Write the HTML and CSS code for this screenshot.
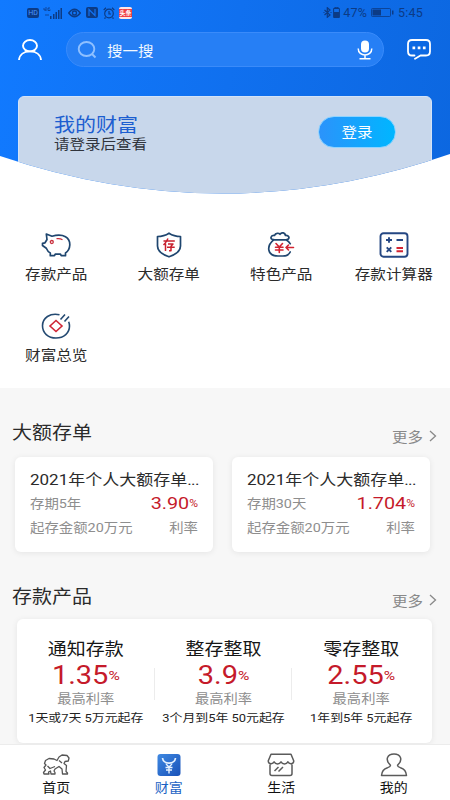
FILE: index.html
```html
<!DOCTYPE html>
<html lang="zh-CN">
<head>
<meta charset="utf-8">
<title>财富</title>
<link rel="stylesheet" href="styles.css">
</head>
<body>
<div class="app">
  <header class="hero">
    <div class="status">
      <div class="status-left">
        <span class="hd">HD</span>
        <svg class="signal" width="20" height="12" viewBox="0 0 20 12"><path d="M1 1v2h2M3 0v4M7 1H5v2.500h2V2.500M3 7v2M5 7v2" fill="none" stroke="currentColor" stroke-width=".8"/><path d="M7 9h1.500v3H7zM10 7h1.500v5H10zM12.500 5H14v7h-1.500zM15 3h1.500v9H15zM17.500 1H19v11h-1.500z" fill="currentColor"/></svg>
        <svg width="13" height="10" viewBox="0 0 13 10" fill="none" stroke="currentColor" stroke-width="1.300"><path d="M.7 5Q6.500-2.500 12.300 5 6.500 12.500.7 5Z"/><circle cx="6.500" cy="5" r="2"/></svg>
        <svg class="nfc" width="12" height="11" viewBox="0 0 12 11"><rect width="12" height="11" rx="2" fill="currentColor"/><path d="M3 9V2.500l6 6V2" fill="none" stroke="#1172f3" stroke-width="1.200"/></svg>
        <svg class="alarm" width="12" height="12" viewBox="0 0 12 12" fill="none" stroke="currentColor" stroke-width="1.200"><circle cx="6" cy="6.500" r="4.300"/><path d="M6 4v3h2M.7 3 3 .8M9 .8 11.300 3M2.500 10.500 1.500 11.700M9.500 10.500l1 1.200"/></svg>
        <span class="news">头条</span>
      </div>
      <div class="status-right">
        <svg width="9" height="11" viewBox="0 0 9 11" fill="none" stroke="currentColor" stroke-width="1.200"><path d="m1.500 3 5.500 5-2.700 2.300V.7L7 3 1.500 8M.5 5.500h1M7.500 5.500h1"/></svg>
        <svg width="7" height="11" viewBox="0 0 7 11"><path d="M2 0h3v1H2zM.6 1.500h5.800v9H.6z" fill="none" stroke="currentColor"/><path d="M1 5h5v5H1z" fill="currentColor"/></svg>
        <span class="pct">47%</span>
        <svg class="battery" width="23" height="9" viewBox="0 0 23 9"><rect x=".5" y=".5" width="19" height="8" rx="1" fill="none" stroke="currentColor" stroke-width=".8"/><path d="M1.500 1.500h8.500v6H1.500zM21 2.500h1.500v4H21z" fill="currentColor"/></svg>
        <span>5:45</span>
      </div>
    </div>
    <div class="topbar">
      <svg class="user" width="24" height="22" viewBox="0 0 24 22" fill="none" stroke="#fff" stroke-width="1.900"><ellipse cx="12" cy="6.700" rx="7" ry="5.700"/><path d="M1 21C1.500 15.500 6 12.400 12 12.400S22.500 15.500 23 21"/></svg>
      <div class="search">
        <svg width="20" height="18" viewBox="0 0 20 18" fill="none" stroke="#8fc0ff" stroke-width="1.900"><ellipse cx="9.500" cy="8" rx="7.800" ry="7"/><path d="m15 13 3.500 3.500"/></svg>
        <span class="flat">搜一搜</span>
        <svg class="mic" width="16" height="20" viewBox="0 0 16 20"><rect x="4" y=".5" width="8" height="12" rx="4" fill="#fff"/><path d="M1.200 8.500c0 8.700 13.600 8.700 13.600 0M8 15v3.500M2.500 18.700h11" fill="none" stroke="#fff" stroke-width="1.500"/></svg>
      </div>
      <svg class="chat" width="24" height="21" viewBox="0 0 24 21"><path d="M7.500 16.500H5Q1 16.500 1 12.500V5Q1 1 5 1h14q4 0 4 4v7.500q0 4-4 4h-5.500L8 19.800" fill="none" stroke="#fff" stroke-width="1.800" stroke-linejoin="round" stroke-linecap="round"/><path d="M5.500 7.500h2.700v2.700H5.500zM10.700 7.500h2.700v2.700h-2.700zM15.900 7.500h2.700v2.700h-2.700z" fill="#fff"/></svg>
    </div>
    <div class="wealth">
      <div>
        <div class="wealth-title flat">我的财富</div>
        <div class="wealth-sub flat">请登录后查看</div>
      </div>
      <div class="login"><span class="flat">登录</span></div>
    </div>
  </header>

  <nav class="menu">
    <div class="entry">
      <svg width="30" height="26" viewBox="0 0 30 26" fill="none" stroke="#1f466f" stroke-width="1.700" stroke-linejoin="round"><path d="M6 7.500 5.300 2 11 4.200C23 1 29 6 28.800 13c-.2 4-2 6.500-4.300 8v2.700h-4.300l-.7-1.500h-5.300l-.7 1.500H9.300V21C7 20 6 18 5.300 16.300L1.500 13.500V11.300L4 10.800Z"/><g stroke="#c92f3d" stroke-width="1.300"><circle cx="10.800" cy="10" r="1.500"/><path d="M15.500 6.700q3.500-.5 6 1"/></g></svg>
      <span class="flat">存款产品</span>
    </div>
    <div class="entry">
      <svg width="26" height="26" viewBox="0 0 26 26" fill="none" stroke="#1f466f" stroke-width="1.700" stroke-linejoin="round"><path d="M13 1.200Q18 4.500 24.500 4.500V14c0 5-5 8.500-11.500 10.800C6.500 22.500 1.500 19 1.500 14V4.500Q8 4.500 13 1.200Z"/><g stroke="#c71f2e" stroke-width="1.500"><path d="M7.500 9h11.300M12 6.500Q10.500 10 7.500 13M9.500 11.500V19M12 12h5l-2 2.300v4.500h-2M11 15.300h7.700"/></g></svg>
      <span class="flat">大额存单</span>
    </div>
    <div class="entry">
      <svg width="28" height="26" viewBox="0 0 28 26" fill="none" stroke="#1f466f" stroke-width="1.700" stroke-linecap="round" stroke-linejoin="round"><path d="M7 7.700C2 7.500 4 2.800 7.500 3.500 8.500.5 12 1 13 2.300 15-.2 18 .7 18.500 3.500 23 3 23 7.500 19 7.800ZM7 7.700C-1 14 0 24 11 24h5c3.500 0 6-1.300 7.200-4M19 7.800q3 1.700 4.300 4"/><g stroke="#d32432" stroke-width="1.600"><path d="m9 11.500 3.300 3.500 3.200-3.500M8.500 15.200H16M8.500 18H16M12.300 15v5.500M26.500 15.500H19M21.500 13 19 15.500l2.500 2.500"/></g></svg>
      <span class="flat">特色产品</span>
    </div>
    <div class="entry">
      <svg width="30" height="26" viewBox="0 0 30 26" fill="none" stroke="#254783" stroke-width="1.900"><rect x="1.500" y="1.200" width="27" height="23.500" rx="3"/><path d="M7 8h6M10 5.300v5.400M17.500 8H24M7.700 15.300l4.600 4.600m0-4.600-4.600 4.600"/><path d="M17.500 16H24M17.500 19.200H24" stroke="#d32432"/></svg>
      <span class="flat">存款计算器</span>
    </div>
    <div class="entry">
      <svg width="30" height="26" viewBox="0 0 30 26" fill="none" stroke="#244a72" stroke-width="1.600"><path d="M18.500 1.700C9-.5 1.500 5 1.500 12.800 1.500 20 7 25 15 25s13.500-5 13.500-12c0-1.700-.3-3-.8-4.300M19.500 6.500l4.500-5M23.500 8.500l4.500-5"/><path d="m15 7.500 6 5.500-6 5.500L9 13Z" stroke="#cf2635"/></svg>
      <span class="flat">财富总览</span>
    </div>
  </nav>

  <main class="content">
    <div class="section-head">
      <h2 class="flat">大额存单</h2>
      <div class="more"><span class="flat">更多</span><svg width="8" height="12" viewBox="0 0 8 12" fill="none" stroke="#898989" stroke-width="1.300"><path d="m1 1 5.500 5L1 11"/></svg></div>
    </div>
    <div class="certs">
      <article class="cert">
        <h3 class="flat">2021年个人大额存单<i>...</i></h3>
        <div class="cert-row"><span class="flat">存期5年</span><b class="rate">3.90<small>%</small></b></div>
        <div class="cert-row"><span class="flat">起存金额20万元</span><span class="flat">利率</span></div>
      </article>
      <article class="cert">
        <h3 class="flat">2021年个人大额存单<i>...</i></h3>
        <div class="cert-row"><span class="flat">存期30天</span><b class="rate">1.704<small>%</small></b></div>
        <div class="cert-row"><span class="flat">起存金额20万元</span><span class="flat">利率</span></div>
      </article>
    </div>
    <div class="section-head second">
      <h2 class="flat">存款产品</h2>
      <div class="more"><span class="flat">更多</span><svg width="8" height="12" viewBox="0 0 8 12" fill="none" stroke="#898989" stroke-width="1.300"><path d="m1 1 5.500 5L1 11"/></svg></div>
    </div>
    <div class="deposits">
      <article class="deposit">
        <h3 class="flat">通知存款</h3>
        <b class="rate">1.35<small>%</small></b>
        <span class="caption flat">最高利率</span>
        <span class="terms flat">1天或7天 5万元起存</span>
      </article>
      <article class="deposit">
        <h3 class="flat">整存整取</h3>
        <b class="rate">3.9<small>%</small></b>
        <span class="caption flat">最高利率</span>
        <span class="terms flat">3个月到5年 50元起存</span>
      </article>
      <article class="deposit">
        <h3 class="flat">零存整取</h3>
        <b class="rate">2.55<small>%</small></b>
        <span class="caption flat">最高利率</span>
        <span class="terms flat">1年到5年 5元起存</span>
      </article>
    </div>
  </main>

  <footer class="tabs">
    <div class="tab">
      <svg width="28" height="22" viewBox="0 0 28 22" fill="none" stroke="#555" stroke-width="1.300" stroke-linejoin="round"><path d="M1.500 18.500 3.500 16 2 13.500 4 11 2.500 9.500 3.500 6.500 7 4.500l5 .5 3 1.500 2-3.500 3-2 5 .5 2 2.500-.7 3-3.300.5-1 2 2.500 2-.5 6 1.500 1.500V20h-5l-.5-5-3-2.500-4 2.500-1 2 1 1.500V20H9l-.5-3L6.500 18l.5 2H2ZM5.500 12l2.500 2.500 5-2M17 6.500l3 2.500"/></svg>
      <span class="flat">首页</span>
    </div>
    <div class="tab active">
      <svg width="24" height="23" viewBox="0 0 24 23"><defs><linearGradient id="g" x2="1" y2="1"><stop stop-color="#3f89e2"/><stop offset="1" stop-color="#1851b8"/></linearGradient></defs><rect x=".5" y=".5" width="23" height="22" rx="3" fill="url(#g)"/><g fill="none" stroke="#e6f2ff" stroke-width="1.700"><path d="M5.500 4.500c1 6.800 12 6.800 13 0"/><path d="m9 10.500 3 3 3-3M8.500 14h7M9 16.500h6M12 13v7" stroke-width="1.400"/></g></svg>
      <span class="flat">财富</span>
    </div>
    <div class="tab">
      <svg width="28" height="24" viewBox="0 0 28 24" fill="none" stroke="#5b5b5b" stroke-width="1.500" stroke-linejoin="round"><path d="M4 1.200h20L26.800 8c0 3.200-4.600 3.600-5.900.8-1.500 2.800-5.400 2.800-6.900 0-1.500 2.800-5.400 2.800-6.900 0C5.800 11.600 1.200 11.200 1.200 8ZM3 10.500V20.500q0 2 2 2h18q2 0 2-2v-10M7.500 18l4-4M11.500 18.500l4.500-4.500"/></svg>
      <span class="flat">生活</span>
    </div>
    <div class="tab">
      <svg width="28" height="24" viewBox="0 0 28 24" fill="none" stroke="#5b5b5b" stroke-width="1.500" stroke-linejoin="round"><path d="M10.500 12.200C4.500 6.500 7.500 1 14 1s9.500 5.500 3.500 11.200c0 1.500 1 1.800 3 2.500 4 1.300 5.700 3.500 6 7.800h-25c.3-4.300 2-6.500 6-7.800 2-.7 3-1 3-2.500Z"/></svg>
      <span class="flat">我的</span>
    </div>
  </footer>
</div>
</body>
</html>
```
FILE: styles.css
```css
* { box-sizing: border-box; margin: 0; padding: 0; }
body {
  font-family: Roboto, "Noto Sans CJK SC", sans-serif;
  background: #fff;
  color: #2b2b2b;
}
h2, h3, b { font-weight: 400; }
svg { display: block; flex: none; }
.app {
  width: 450px;
  height: 800px;
  overflow: hidden;
  display: flex;
  flex-direction: column;
}
/* Wide letterforms */
.flat { display: block; transform: scaleY(.9); white-space: nowrap; }

.hero {
  height: 195px;
  flex: none;
  background: linear-gradient(100deg, #117aff 0%, #1070ef 50%, #0c67e0 100%);
  clip-path: path("M0 0H450V154Q225 232 0 156Z");
}
.status {
  height: 24px;
  padding: 1px 27px 0;
  display: flex;
  justify-content: space-between;
  color: #0c3b85;
}
.status-left, .status-right { display: flex; align-items: center; }
.status-left { gap: 4px; }
.hd {
  width: 12px;
  height: 10px;
  border-radius: 2px;
  background: currentColor;
  font-size: 7px;
  line-height: 10px;
  text-align: center;
}
.hd::first-line { color: #4b98ff; }
.signal { margin-right: 1px; }
.nfc, .alarm { margin-left: 1px; }
.news {
  width: 13px;
  height: 12px;
  border: solid #ffe5e5;
  border-width: 2px 0;
  border-radius: 2px;
  background: #ef4046;
  color: #fff;
  font-size: 6px;
  font-weight: 700;
  line-height: 8px;
  text-align: center;
}
.status-right { font-size: 12.500px; gap: 1px; letter-spacing: .2px; }
.pct { margin: 0 3px 0 2px; }
.battery { margin-right: 3px; }

.topbar {
  display: flex;
  align-items: center;
  height: 51px;
  padding: 0 18px;
}
.search {
  width: 318px;
  height: 35px;
  margin: 0 23px 0 24px;
  padding: 0 10px;
  border: 1px solid #3a8bfa;
  border-radius: 18px;
  background: #267ff5;
  display: flex;
  align-items: center;
  color: #f2f8ff;
  font-size: 15.500px;
}
.search .flat { margin-left: 10px; }
.mic { margin-left: auto; }

.wealth {
  margin: 21px 18px 0;
  height: 110px;
  padding: 19px 35px 0 35px;
  border: 1px solid #d3e3f8;
  border-radius: 6px;
  background: #c8d7eb;
  display: flex;
  justify-content: space-between;
}
.wealth-title { font-size: 21px; line-height: 20px; color: #1c5ed0; }
.wealth-sub { font-size: 15.500px; line-height: 17px; color: #30343c; }
.login {
  width: 78px;
  height: 32px;
  border: 1px solid #8fd4ff;
  border-radius: 16px;
  background: linear-gradient(90deg, #2b93fb, #00b6ff);
  color: #fff;
  font-size: 15.500px;
  line-height: 30px;
  text-align: center;
}

.menu {
  height: 193px;
  flex: none;
  padding-top: 37px;
  display: grid;
  grid-template-columns: repeat(4, 112.500px);
  grid-auto-rows: 81px;
}
.entry { display: flex; flex-direction: column; align-items: center; }
.entry .flat { margin-top: 6px; font-size: 15.600px; line-height: 20px; }

.content {
  height: 356px;
  flex: none;
  background: #f7f7f7;
  padding-top: 31px;
}
.section-head {
  display: flex;
  justify-content: space-between;
  height: 28px;
  padding: 0 13px 0 12px;
}
.section-head h2 { font-size: 20px; line-height: 28px; }
.more {
  display: flex;
  align-items: center;
  gap: 6px;
  padding-top: 5px;
  font-size: 15.500px;
  color: #898989;
}
.certs {
  display: flex;
  gap: 19px;
  margin: 10px 15px 0;
}
.cert {
  width: 198px;
  height: 95px;
  padding: 11px 15px 0;
  border-radius: 6px;
  background: #fff;
  box-shadow: 0 1px 6px rgba(0, 0, 0, .08);
}
.cert h3 { font-size: 17px; line-height: 24px; }
.cert h3 i { font-style: normal; letter-spacing: -.6px; }
.cert-row {
  display: flex;
  justify-content: space-between;
  height: 23.500px;
  line-height: 24px;
  font-size: 14.400px;
  color: #8e8e8e;
}
.rate {
  display: block;
  transform: scaleY(.87);
  color: #c51a2a;
  font-size: 19.800px;
  white-space: nowrap;
}
.rate small { font-size: 12px; vertical-align: 2px; }
.section-head.second { margin-top: 31px; }
.deposits {
  display: grid;
  grid-template-columns: repeat(3, 1fr);
  width: 415px;
  height: 124px;
  margin: 8px 0 0 17px;
  padding: 18px 2px 0 0;
  border-radius: 6px;
  background: #fff;
  box-shadow: 0 1px 6px rgba(0, 0, 0, .08);
}
.deposit {
  display: flex;
  flex-direction: column;
  align-items: center;
  position: relative;
  margin: 0 -5px;
}
.deposit + .deposit::before {
  content: "";
  position: absolute;
  left: 4px;
  top: 31px;
  width: 1px;
  height: 32px;
  background: #ececec;
}
.deposit h3 { font-size: 19px; line-height: 26px; color: #161616; }
.deposit .rate { font-size: 29px; line-height: 25px; }
.deposit .rate small { font-size: 15.500px; vertical-align: 4px; line-height: 1; }
.caption { font-size: 14.300px; line-height: 21px; color: #8e8e8e; }
.terms { font-size: 12.900px; line-height: 17px; color: #222; }

.tabs {
  height: 56px;
  flex: none;
  border-top: 1px solid #ececec;
  background: #fff;
  display: grid;
  grid-template-columns: repeat(4, 1fr);
}
.tab { display: flex; flex-direction: column; align-items: center; padding-top: 8px; }
.tab svg { height: 24px; }
.tab .flat { font-size: 14px; line-height: 20px; color: #111; }
.tab.active .flat { color: #1d63c4; }
```
